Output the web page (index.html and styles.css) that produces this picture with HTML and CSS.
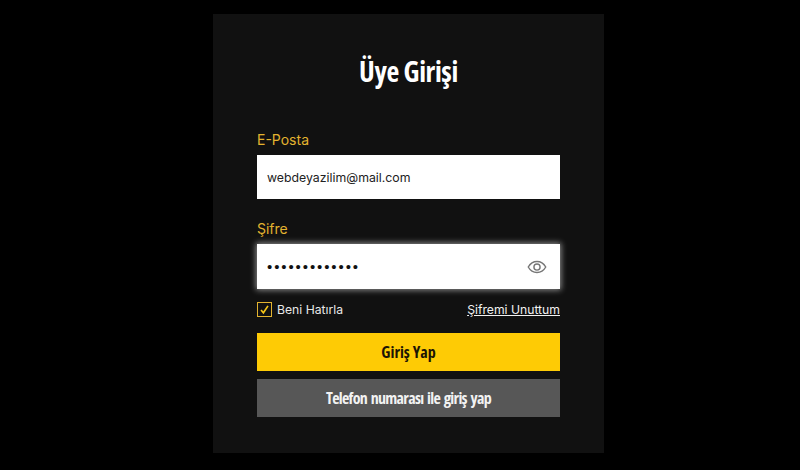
FILE: index.html
```html
<!DOCTYPE html>
<html lang="tr">
	<head>
		<title>Üye Girişi</title>
		<meta http-equiv="Content-Type" content="text/html; charset=utf-8">
		<link rel="stylesheet" href="styles.css">
	</head>
	<body>
		<div class="card">
			<h1>Üye Girişi</h1>
			<label class="field-label">E-Posta</label>
			<div class="input">webdeyazilim@mail.com</div>
			<label class="field-label second">Şifre</label>
			<div class="input focused">
				<span class="dots">•••••••••••••</span>
				<svg class="eye" width="20" height="20" viewBox="0 0 24 24" fill="none" stroke="#777" stroke-width="1.7">
					<path d="M1.5 12C4 7.6 7.7 5.4 12 5.4S20 7.6 22.5 12C20 16.4 16.3 18.6 12 18.6S4 16.4 1.5 12Z"/>
					<circle cx="12" cy="12" r="3.7"/>
				</svg>
			</div>
			<div class="options">
				<span class="remember">
					<span class="check">
						<svg width="11" height="11" viewBox="0 0 12 12" fill="none" stroke="#f5c518" stroke-width="1.8"><path d="M2.2 6.5 4.8 9.6 9.8 2"/></svg>
					</span>
					Beni Hatırla
				</span>
				<a class="forgot" href="#">Şifremi Unuttum</a>
			</div>
			<button class="button primary">Giriş Yap</button>
			<button class="button secondary">Telefon numarası ile giriş yap</button>
		</div>
	</body>
</html>
```

FILE: styles.css
```css
body {
	margin: 0;
	padding: 14px 0 0 213px;
	height: 456px;
	overflow: hidden;
	background-color: #000;
	font-family: Inter, "Liberation Sans", sans-serif;
}
.card {
	box-sizing: border-box;
	width: 391px;
	height: 439px;
	padding: 38px 44px 0;
	background-color: #111;
}
h1 {
	margin: 0 0 41px;
	text-align: center;
	color: #fff;
	font-family: "Open Sans", sans-serif;
	font-stretch: 75%;
	font-size: 28px;
	letter-spacing: -.4px;
	line-height: 38px;
	font-weight: 700;
}
.field-label {
	display: block;
	height: 24px;
	color: #e3b32f;
	font-size: 14px;
	line-height: 18px;
}
.second {
	margin-top: 21px;
}
.input {
	display: flex;
	align-items: center;
	justify-content: space-between;
	box-sizing: border-box;
	height: 44px;
	padding: 0 13px 0 10px;
	background-color: #fff;
	color: #222;
	font-size: 12.3px;
}
.focused {
	height: 45px;
	box-shadow: 0 0 6px 1px rgba(255, 255, 255, .55);
}
.dots {
	font-family: "Liberation Sans", sans-serif;
	font-size: 15px;
	letter-spacing: 1.9px;
	color: #111;
}
.options {
	display: flex;
	align-items: center;
	justify-content: space-between;
	height: 16px;
	margin: 12px 0 16px;
	font-size: 12.2px;
	color: #e8e8e8;
}
.remember {
	display: flex;
	align-items: center;
	gap: 5px;
}
.check {
	display: flex;
	align-items: center;
	justify-content: center;
	box-sizing: border-box;
	width: 15px;
	height: 15px;
	border: 1px solid #e3b32f;
}
.forgot {
	color: #f2f2f2;
}
.button {
	display: block;
	width: 100%;
	height: 38px;
	padding: 0;
	border: none;
	font-family: "Open Sans", sans-serif;
	font-stretch: 75%;
	font-weight: 700;
	font-size: 16px;
}
.primary {
	background-color: #fecb05;
	color: #1c1505;
}
.secondary {
	margin-top: 8px;
	background-color: #575757;
	color: #f2f2f2;
	letter-spacing: -.7px;
	word-spacing: 1.5px;
}
```
